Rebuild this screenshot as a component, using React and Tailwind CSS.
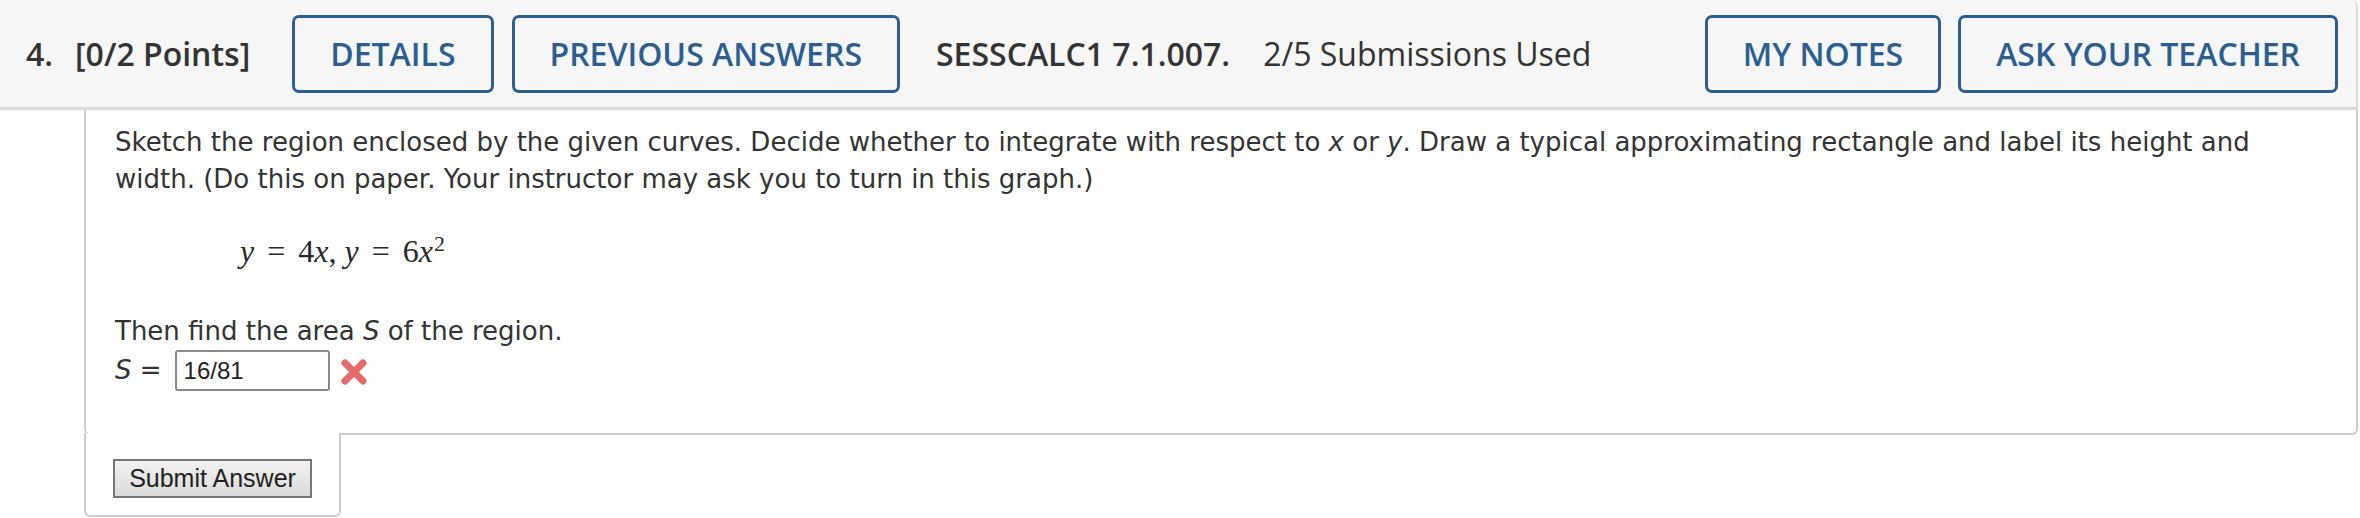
import React from "react";

const blueBtn =
  "h-[78px] px-[35px] border-[3px] border-[#2b5e92] rounded-[7px] text-[#2b5e92] font-semibold text-[32px] flex items-center bg-[#f6f6f6]";

const WrongMark = () => (
  <svg width="30" height="30" viewBox="0 0 30 30" className="ml-[9px] mt-[7px]">
    <path d="M6 6 L24 24 M24 6 L6 24" stroke="#e66a6a" strokeWidth="7" strokeLinecap="round" />
  </svg>
);

export default function App() {
  return (
    <div className="w-[2360px] h-[518px] bg-white overflow-hidden">
      {/* Question header */}
      <div className="w-[2358px] h-[110px] bg-[#f6f6f6] border-b-[3px] border-r-2 border-[#dcdcdc] rounded-tr-md flex items-center pl-[26px] pr-[18px] font-['Open_Sans',sans-serif] text-[#333]">
        <span className="text-[32px] font-semibold">
          <span className="mr-[22px]">4.</span>[0/2 Points]
        </span>
        <div className="ml-[42px] flex items-center gap-[18px]">
          <button className={blueBtn}>DETAILS</button>
          <button className={blueBtn}>PREVIOUS ANSWERS</button>
        </div>
        <span className="ml-[36px] text-[32px] font-semibold">SESSCALC1 7.1.007.</span>
        <span className="ml-[33px] text-[32px]">2/5 Submissions Used</span>
        <div className="ml-auto flex items-center gap-[17px]">
          <button className={blueBtn}>MY NOTES</button>
          <button className={blueBtn}>ASK YOUR TEACHER</button>
        </div>
      </div>

      {/* Question body */}
      <div className="ml-[84px] w-[2274px] h-[325px] border-l-2 border-r-2 border-b-2 border-[#cccccc] rounded-b-md pl-[29px] pt-[14px] font-['DejaVu_Sans',Verdana,sans-serif] text-[#333] text-[26px] leading-[37px]">
        <p className="w-[2190px]">
          Sketch the region enclosed by the given curves. Decide whether to integrate with respect to{" "}
          <i>x</i> or <i>y</i>. Draw a typical approximating rectangle and label its height and width.
          (Do this on paper. Your instructor may ask you to turn in this graph.)
        </p>
        <div className="mt-[35px] ml-[125px] flex items-baseline font-['Liberation_Serif',serif] text-[32px] text-[#2a2a2a] leading-[36px]">
          <i>y</i>
          <span className="mx-[13px]">=</span>
          <span>4</span>
          <i>x</i>
          <span className="mr-[8px]">,</span>
          <i>y</i>
          <span className="mx-[13px]">=</span>
          <span>6</span>
          <i>x</i>
          <sup className="text-[22px] ml-[1px]">2</sup>
        </div>
        <p className="mt-[44px]">
          Then find the area <i>S</i> of the region.
        </p>
        <div className="flex items-start">
          <span className="mt-[2px]">
            <i>S</i> =
          </span>
          <div className="ml-[13px] w-[155px] h-[41px] border-2 border-[#8a8a8a] rounded-[3px] flex items-center pl-[7px] font-['Liberation_Sans',Arial,sans-serif] text-[24px] text-[#222]">
            16/81
          </div>
          <WrongMark />
        </div>
      </div>

      {/* Submit area */}
      <div className="ml-[84px] -mt-[2px] w-[257px] h-[84px] bg-white border-l-2 border-r-2 border-b-2 border-[#cccccc] rounded-b-md pl-[27px] pt-[26px]">
        <button className="w-[199px] h-[39px] border-2 border-[#777] bg-gradient-to-b from-[#f2f2f2] to-[#dadada] font-['Liberation_Sans',Arial,sans-serif] text-[25px] text-[#222] leading-none">
          Submit Answer
        </button>
      </div>
    </div>
  );
}
